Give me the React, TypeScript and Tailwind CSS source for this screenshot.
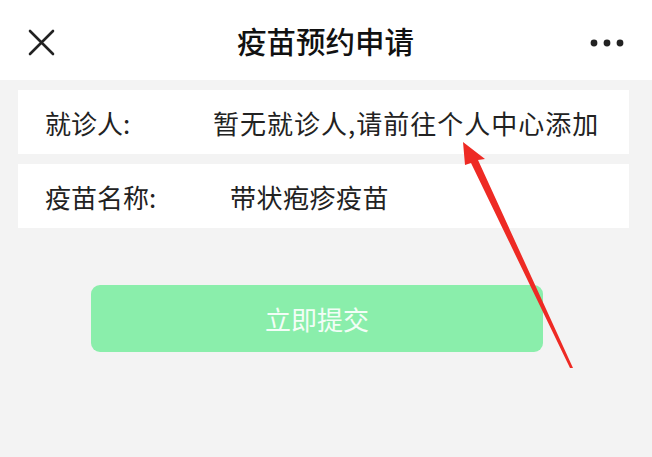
const font = { fontFamily: '"Noto Sans CJK SC", "Noto Sans", sans-serif' };

function Row({ label, value, gap, track }: { label: string; value: string; gap: string; track?: string }) {
  return (
    <div className="flex h-[64px] items-center bg-white pl-[27px] text-[26px] text-[#222]">
      <span className={gap}>{label}</span>
      <span className={track}>{value}</span>
    </div>
  );
}

export default function App() {
  return (
    <div className="relative h-[457px] w-[652px] overflow-hidden bg-[#f3f3f3]" style={font}>
      <header className="flex h-[80px] items-center justify-between bg-white px-[28px]">
        <svg width="27" height="27" viewBox="0 0 27 27" className="mt-[4px]">
          <path d="M2 2 L25 25 M25 2 L2 25" stroke="#222" strokeWidth="2.6" strokeLinecap="round" />
        </svg>
        <h1 className="ml-[6px] text-[29.5px] font-medium text-[#111]">疫苗预约申请</h1>
        <svg width="34" height="8" viewBox="0 0 34 8" className="mt-[6px]">
          <circle cx="4" cy="4" r="3.4" fill="#222" />
          <circle cx="17" cy="4" r="3.4" fill="#222" />
          <circle cx="30" cy="4" r="3.4" fill="#222" />
        </svg>
      </header>

      <div className="flex flex-col gap-[10px] px-[18px] pt-[10px] pr-[23px]">
        <Row label="就诊人:" value="暂无就诊人,请前往个人中心添加" gap="w-[168px]" track="tracking-[1px]" />
        <Row label="疫苗名称:" value="带状疱疹疫苗" gap="w-[185px]" track="tracking-[0.5px]" />
      </div>

      <div className="mt-[57px] flex px-[91px] pr-[109px]">
        <button className="h-[67px] w-full rounded-[9px] bg-[#8aeeab] text-[26px] text-white/90">
          立即提交
        </button>
      </div>

      {/* red annotation arrow */}
      <svg className="pointer-events-none absolute left-0 top-0" width="652" height="457" viewBox="0 0 652 457">
        <polygon
          points="463,142 485,159 478,160 573,368 570,368 471,163 465,165"
          fill="#ee2a24"
        />
      </svg>
    </div>
  );
}
